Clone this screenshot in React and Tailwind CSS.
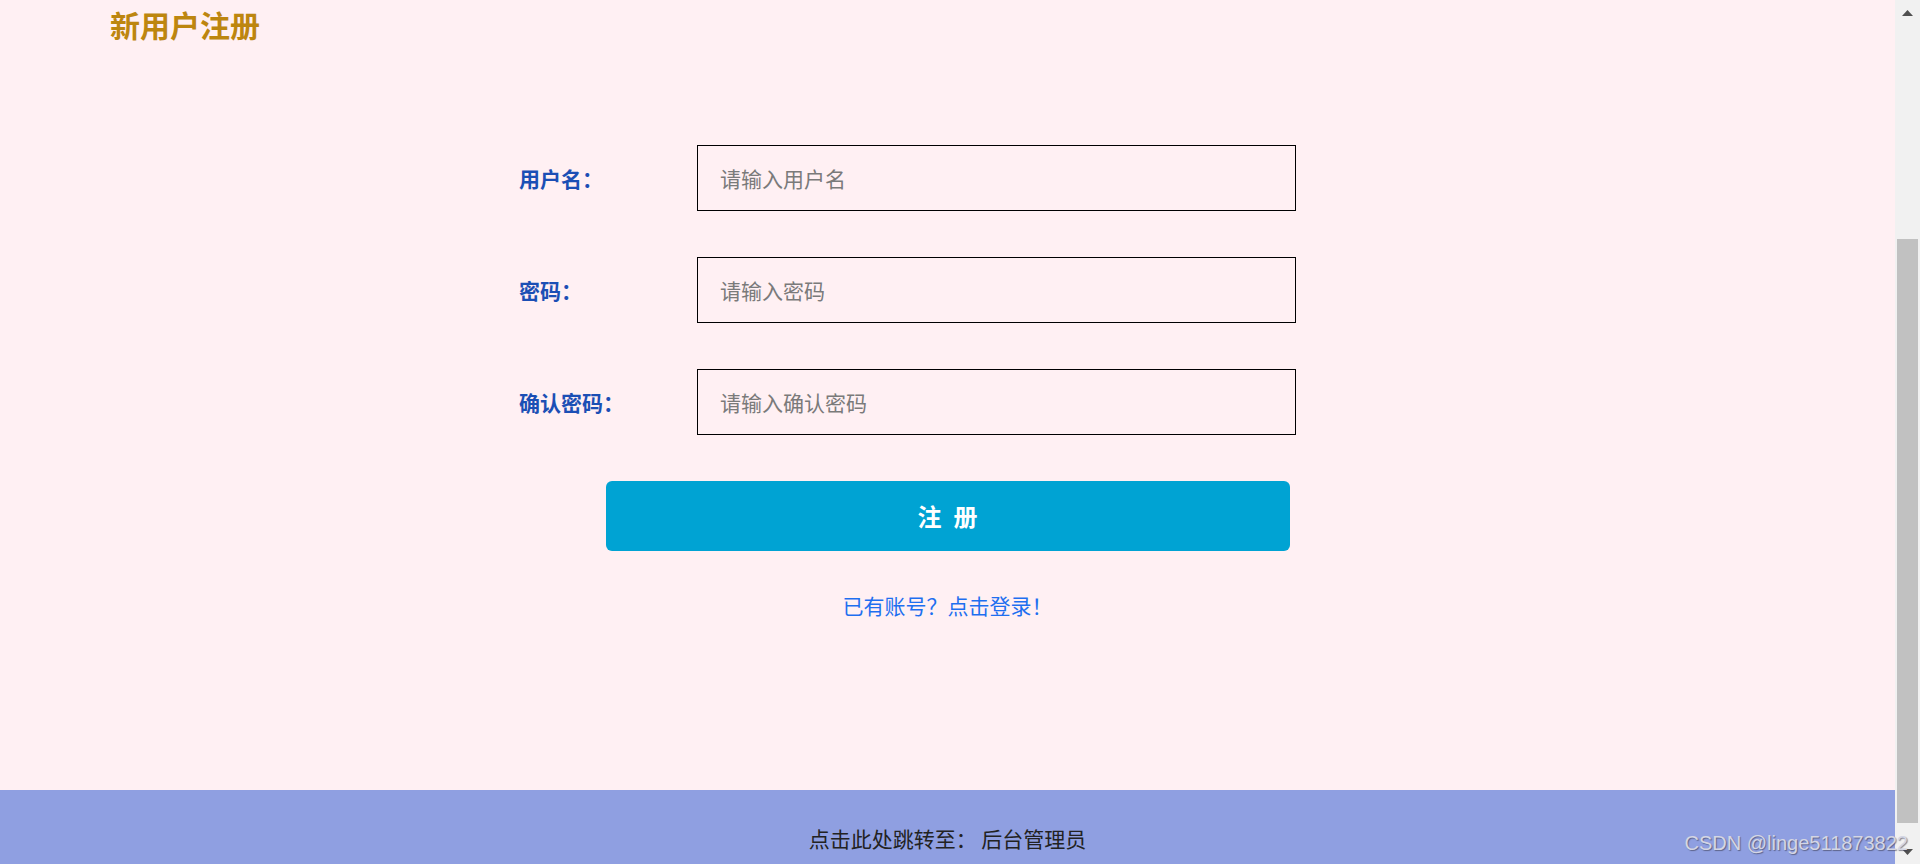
import React from "react";

function Row({ label, placeholder, type = "text" }) {
  return (
    <div className="flex items-center pl-[519px]">
      <label className="w-[178px] text-[21px] font-bold text-[#1b4fb5] leading-[30px]">
        {label}
      </label>
      <input
        type={type}
        placeholder={placeholder}
        className="w-[599px] h-[66px] border border-black bg-transparent pl-[22px] text-[21px] text-[#333] placeholder:text-[#7a7a7a] outline-none"
      />
    </div>
  );
}

export default function App() {
  return (
    <div className="relative flex h-[864px] w-full overflow-hidden font-['Noto_Sans_CJK_SC',sans-serif]">
      <div className="flex flex-1 flex-col bg-[#fff0f3]">
        <h3 className="pl-[110px] pt-[2px] text-[30px] font-bold leading-[44px] text-[#bd860f]">
          新用户注册
        </h3>

        <div className="mt-[99px] flex flex-col gap-[46px]">
          <Row label="用户名：" placeholder="请输入用户名" />
          <Row label="密码：" placeholder="请输入密码" type="password" />
          <Row label="确认密码：" placeholder="请输入确认密码" type="password" />
        </div>

        <button className="mx-auto mt-[46px] flex h-[70px] w-[684px] items-center justify-center gap-[12px] rounded-[6px] bg-[#00a3d3] text-[24px] font-bold text-white">
          <span>注</span>
          <span>册</span>
        </button>

        <div className="mt-[39px] text-center text-[21px] leading-[30px] text-[#1e6ff0]">
          已有账号？点击登录！
        </div>

        <div className="mt-auto h-[74px] bg-[#8f9fe1] pt-[33px] text-center text-[21px] leading-[30px] text-[#222]">
          点击此处跳转至： 后台管理员
        </div>
      </div>

      <div className="flex w-[25px] flex-col items-center bg-[#f1f1f1]">
        <div className="flex h-[25px] w-full items-center justify-center">
          <svg width="11" height="6" viewBox="0 0 11 6">
            <path d="M5.5 0 L11 6 L0 6 Z" fill="#505050" />
          </svg>
        </div>
        <div className="h-[214px]" />
        <div className="h-[584px] w-[21px] bg-[#c1c1c1]" />
        <div className="flex-1" />
        <div className="flex h-[25px] w-full items-center justify-center">
          <svg width="11" height="6" viewBox="0 0 11 6">
            <path d="M0 0 L11 0 L5.5 6 Z" fill="#505050" />
          </svg>
        </div>
      </div>

      <div className="pointer-events-none absolute bottom-[11px] right-[12px] font-['Liberation_Sans',sans-serif] text-[20px] leading-[20px] text-[#d4d6e4] [text-shadow:1px_1px_1px_rgba(60,60,80,0.6)]">
        CSDN @linge511873822
      </div>
    </div>
  );
}
